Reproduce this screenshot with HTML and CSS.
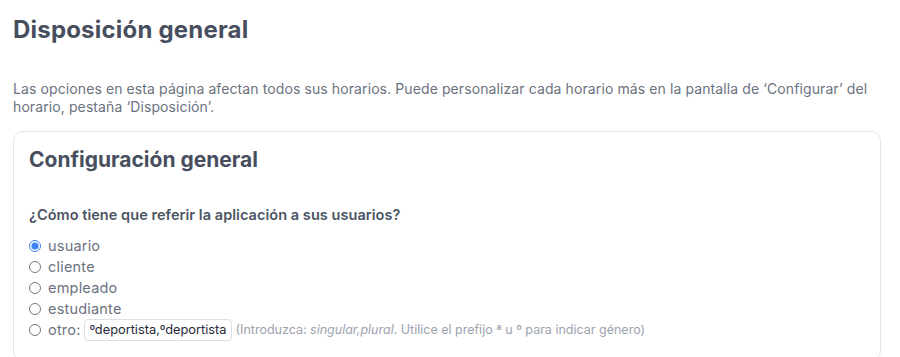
FILE: index.html
```html
<!DOCTYPE html>
<html lang="es">
<head>
    <meta charset="UTF-8">
    <meta name="viewport" content="width=device-width, initial-scale=1.0">
    <title>Disposición general</title>
    <link rel="stylesheet" href="styles.css">
</head>
<body>
    <div class="page">
        <h1>Disposición general</h1>
        <p class="intro">Las opciones en esta página afectan todos sus horarios. Puede personalizar cada horario más en la pantalla de ‘Configurar’ del horario, pestaña ‘Disposición’.</p>

        <div class="card">
            <h2>Configuración general</h2>
            <div class="question">¿Cómo tiene que referir la aplicación a sus usuarios?</div>
            <div class="options">
                <label class="option"><input type="radio" name="ref" checked> usuario</label>
                <label class="option"><input type="radio" name="ref"> cliente</label>
                <label class="option"><input type="radio" name="ref"> empleado</label>
                <label class="option"><input type="radio" name="ref"> estudiante</label>
                <label class="option"><input type="radio" name="ref"> otro:
                    <input type="text" class="other-input" value="ºdeportista,ºdeportistas">
                    <span class="hint">(Introduzca: <em>singular,plural</em>. Utilice el prefijo ª u º para indicar género)</span>
                </label>
            </div>
        </div>
    </div>
</body>
</html>
```

FILE: styles.css
```css
* {
    margin: 0;
    padding: 0;
    box-sizing: border-box;
    font-family: Inter, 'Noto Sans', sans-serif;
}

body {
    background: #fff;
    color: #4b5563;
}

.page {
    padding: 12px 19px 0 13px;
}

h1 {
    font-size: 24px;
    font-weight: 700;
    color: #474e5e;
    line-height: 36px;
    letter-spacing: 0.2px;
}

.intro {
    margin-top: 32px;
    font-size: 14px;
    line-height: 18px;
    letter-spacing: 0.1px;
    color: #6b7280;
}

.card {
    margin-top: 15px;
    border: 1px solid #e5e7eb;
    border-radius: 10px;
    padding: 13px 15px 20px;
}

h2 {
    font-size: 21px;
    font-weight: 700;
    color: #474e5e;
    line-height: 30px;
}

.question {
    margin-top: 30px;
    font-size: 14.5px;
    font-weight: 600;
    color: #4b5563;
    line-height: 20px;
    letter-spacing: 0.05px;
}

.options {
    margin-top: 10px;
    display: flex;
    flex-direction: column;
}

.option {
    display: flex;
    align-items: center;
    gap: 6px;
    font-size: 14.5px;
    letter-spacing: 0.2px;
    color: #6b7280;
    height: 21px;
}

.option input[type="radio"] {
    width: 12px;
    height: 12px;
    margin: 0 1px 0 0;
    accent-color: #3b82f6;
}

.other-input {
    margin-left: -3px;
    width: 148px;
    height: 22px;
    border: 1px solid #dcdfe4;
    border-radius: 4px;
    padding: 0 5px;
    font-size: 12.8px;
    letter-spacing: 0;
    color: #1f2937;
}

.hint {
    margin-left: -2px;
    font-size: 12.5px;
    letter-spacing: 0;
    color: #9ca3af;
}
```
